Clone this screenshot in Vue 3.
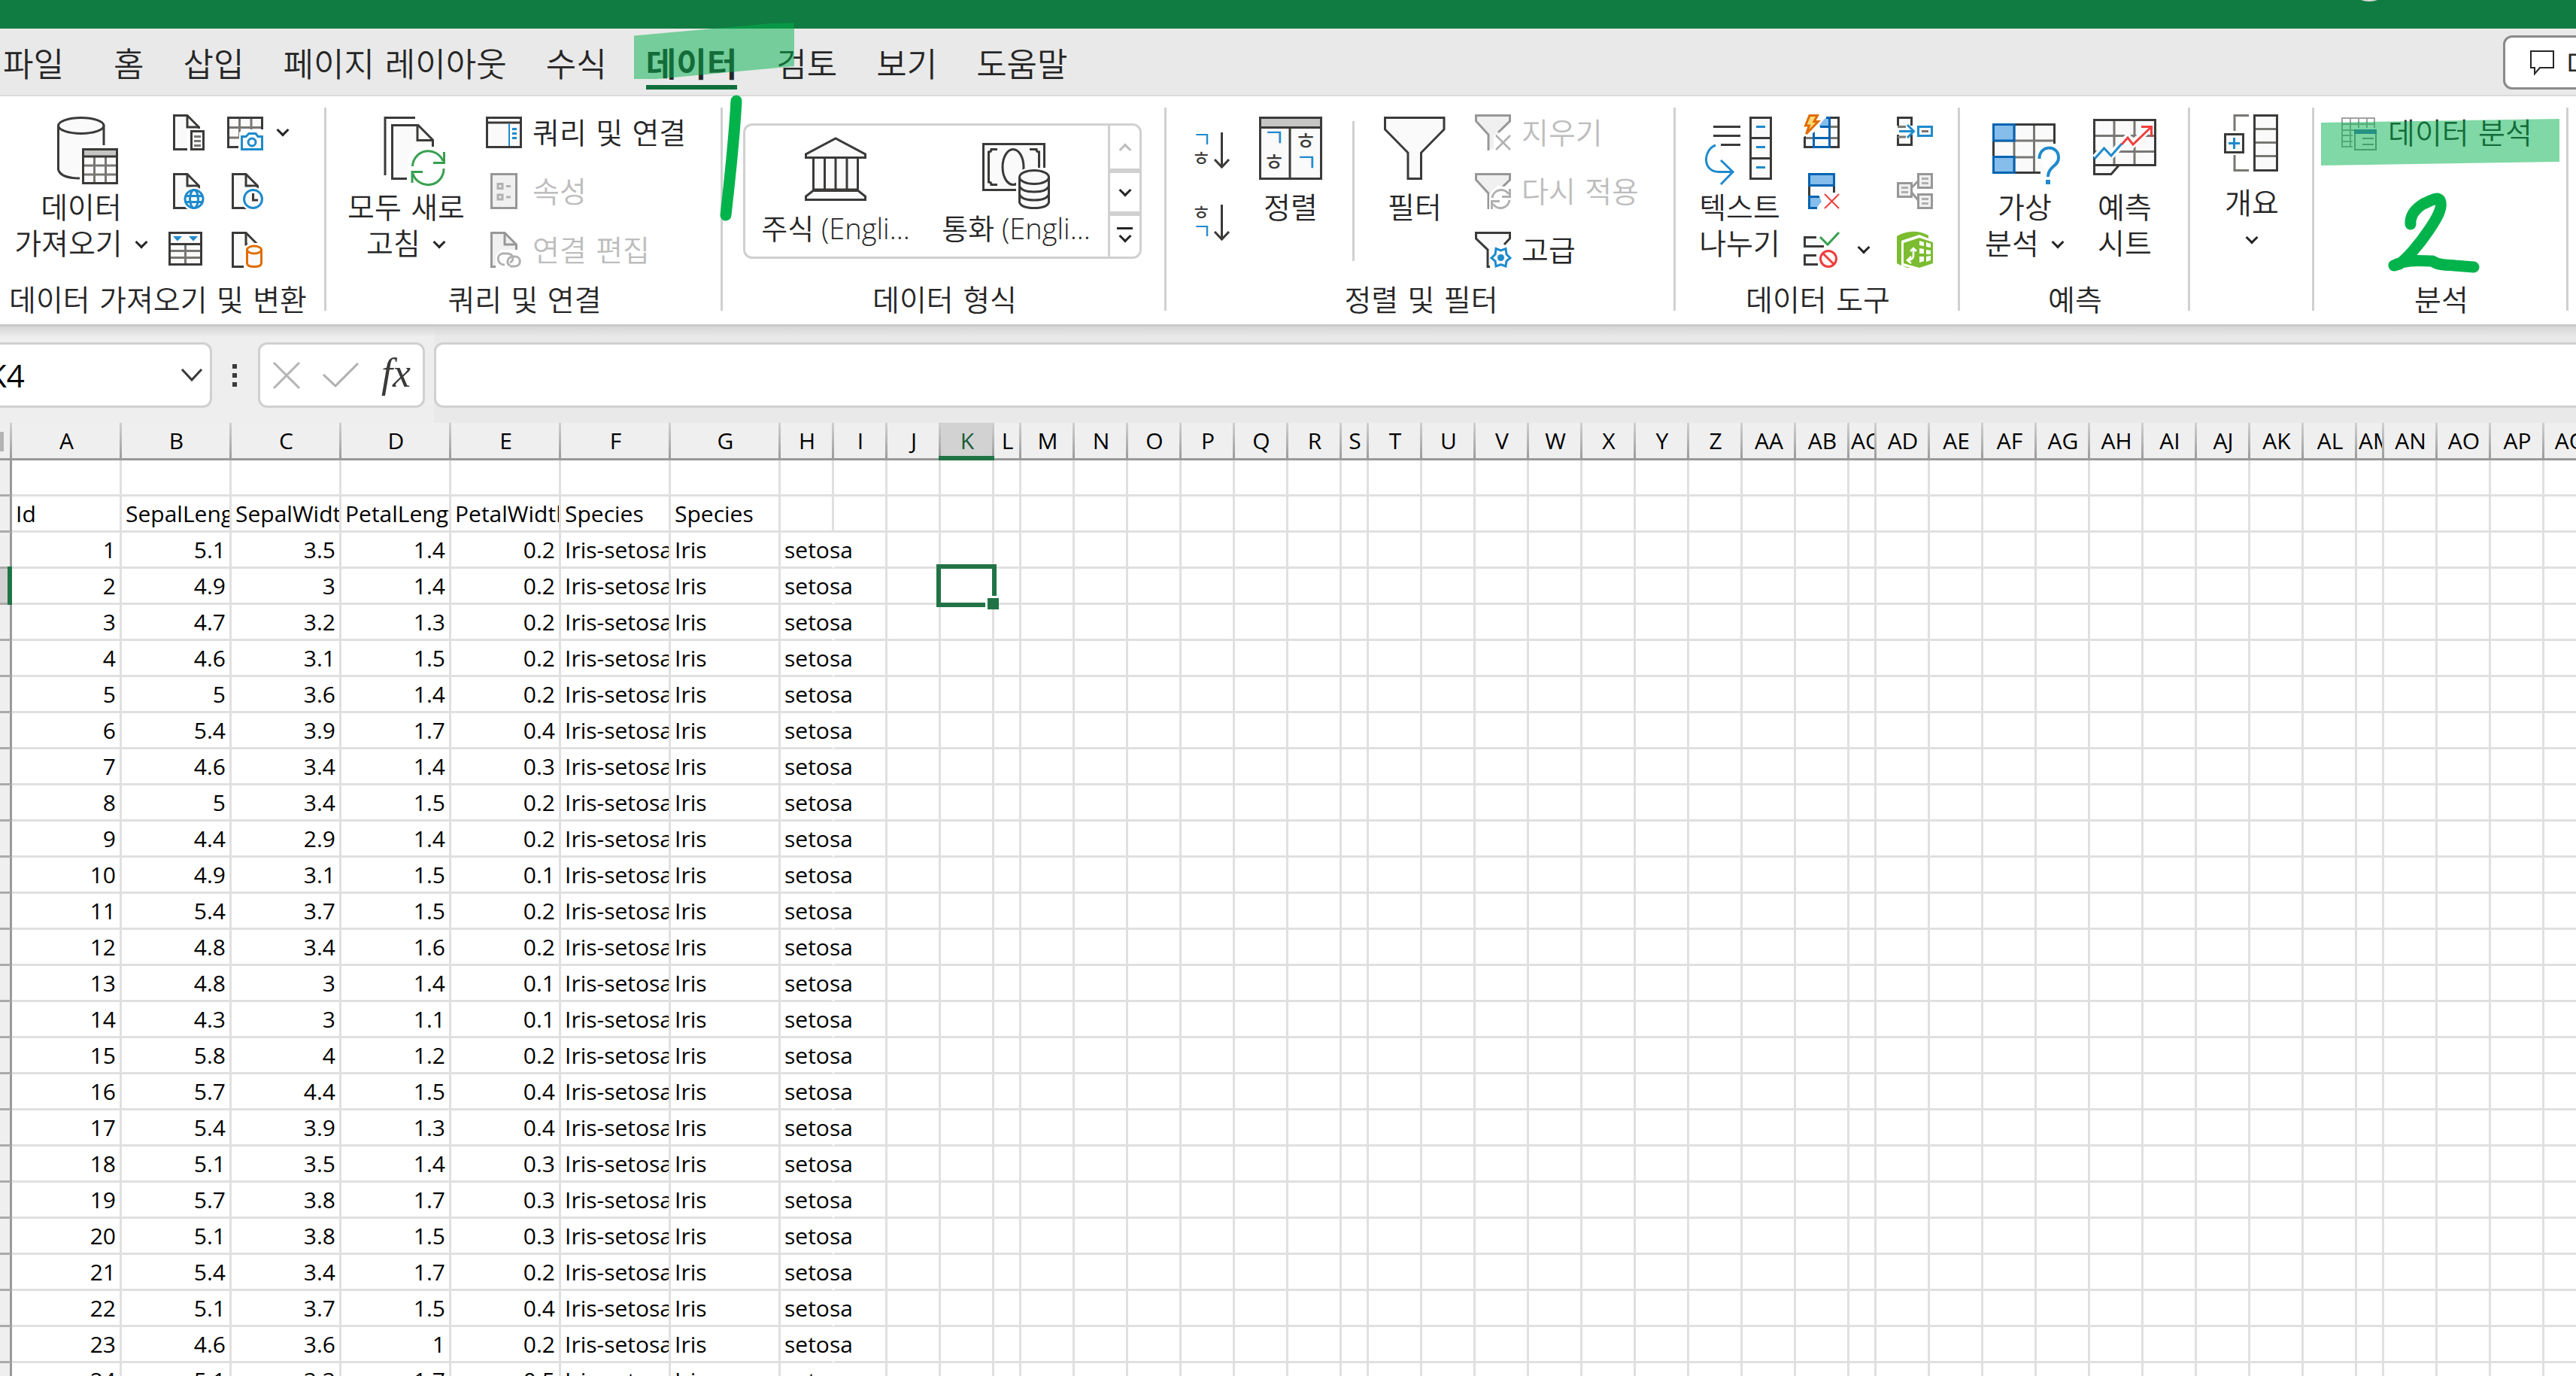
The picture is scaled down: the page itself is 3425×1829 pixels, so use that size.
<script setup>
import { computed, ref } from 'vue'

const tabs = ['파일', '홈', '삽입', '페이지 레이아웃', '수식', '데이터', '검토', '보기', '도움말']
const activeTab = ref('데이터')
const nameBox = ref('K4')
const formula = ref('')

const doc = '<path class="k f" d="M24 46.5H7.5V1.5H25L40.5 17V46.5H24"/><path class="k" d="M25 1.5V17H41"/>'
const docWith = (halo, badge) => doc + halo + badge
const grayFunnel = '<path d="M1.5 1.5H46.5V9L31 25V46H19.5V27L1.5 9Z" fill="#f0f0f0"/><path class="g" d="M31 24L46.5 9V1.5H1.5V9L18 27V48"/>'

const icons = {
  getData:
    '<path class="f" d="M14.5 12V70Q18 81 44 82H75V12Z"/><path class="k" d="M14.5 12V70C16 79 30 82 44 82M75 12V40"/><ellipse class="k f" cx="44.8" cy="12" rx="30.2" ry="10.5"/><path fill="#fff" d="M43 38H97V91H43Z"/><path class="f" d="M47 43H93V89H47Z"/><path fill="#c6c6c4" d="M47 43H93V52H47Z"/><path class="m" d="M62.5 54V88M77.5 54V88M48 65H92M48 77H92"/><path class="k" d="M47.5 43.5H92.5V88.5H47.5ZM47 53H93"/>',
  refreshAll:
    '<path class="k" d="M57 1.5H17V78"/><path class="k f" d="M46 82.5H26.5V11.5H61L80.5 31V42"/><path class="k" d="M60 11.5V31.5H80.5"/><path fill="#fff" d="M48 90V50L60 40H98V90Z"/><path class="gr" d="M53.5 66A21 21 0 0 1 94 59M95.500 47V61.500H81M95 69A21 21 0 0 1 54 76M53 88V73.500H67"/>',
  sortBig:
    '<path class="k f" d="M4.500 1.500H85.500V82.500H4.500Z"/><path fill="#c6c6c4" d="M6 3H84V13H6Z"/><path class="k" d="M5 14.500H85M44 14V83"/><text class="jb" x="23" y="39">ㄱ</text><text class="jk" x="65" y="44">ㅎ</text><text class="jk" x="23" y="72">ㅎ</text><text class="jb" x="66" y="72">ㄱ</text>',
  sortAsc: '<text class="jb s" x="11" y="20">ㄱ</text><text class="jk s" x="10" y="45">ㅎ</text><path class="k" d="M37.500 0V46M28 36L37.500 46L47 36"/>',
  sortDesc: '<text class="jk s" x="10" y="21">ㅎ</text><text class="jb s" x="11" y="46">ㄱ</text><path class="k" d="M37.500 0V46M28 36L37.500 46L47 36"/>',
  filter: '<path class="k f" d="M5.500 1.500H84V17L53.500 48V82.500H36V48L5.500 17Z"/>',
  textColumns:
    '<path class="k" d="M10 13.500H46M10 25.500H46M20 37.500H46"/><path class="k f" d="M59.500 1.500H86.500V82.500H59.500ZM59.500 28.500H86.500M59.500 55.500H86.500"/><path class="b" d="M67 13.500H79M67 40.500H79M67 67.500H79M13 38C-4 44 -5 74 18 73.500H36M20 58L36 73.500L20 90"/>',
  whatIf:
    '<path class="f" d="M2 10H85V74H2Z"/><path class="m" d="M31 10V74M57.500 10V74M3 32H84M3 54H84"/><path class="k" d="M3.500 10.500H84.500V36M3.500 10V74.500H66"/><path class="bf" d="M3.500 10.500H31V32H3.500ZM3.500 53.500H31V74.500H3.500Z"/><path d="M64.500 56C64 37 90.500 37 90 55C90 66 76 66 76 80" fill="#fff" stroke="#fff" stroke-width="11"/><path fill="none" stroke="#1e8bcd" stroke-width="4" d="M64.500 56C64 37 90.500 37 90 55C90 66 76 66 76 80"/><path fill="#1e8bcd" d="M73 84H79V90H73Z"/>',
  forecast:
    '<path class="f" d="M4 4H86V64H38L27 76H4Z"/><path class="m" d="M31 4V64M58 4V64M5 25.500H85M5 46.500H85"/><path class="k" d="M4.500 4.500H85.500V64.500H4.500ZM4.500 64V76.500H27L37 65"/><path fill="none" stroke="#fafafa" stroke-width="10" d="M6 55L17.500 42L27 51L49 28L56 36L79 14"/><path class="b" d="M5 56L17.500 42L27 52L41 36"/><path class="r" d="M41 37L49 28L56 37L80 14M67 13.500H80.500V27"/>',
  outline:
    '<path class="m" d="M41 4.500H22V25M22 57V77.500H41"/><path class="k f" d="M9.500 29.500H33.500V53.500H9.500ZM48.500 4.500H78.500V77.500H48.500Z"/><path class="m" d="M50 22.500H77M50 40.500H77M50 58.500H77"/><path class="b" d="M14 41.500H29M21.500 34V49"/>',
  docList: docWith('<path fill="#fff" d="M25 19H50V50H25Z"/>', '<path class="k f" d="M30.500 22.500H46.500V46.500H30.500Z"/><path class="m" d="M34 29.500H43M34 35.500H43M34 41.500H43"/>'),
  camera:
    '<path class="f" d="M1.500 4.500H46.500V43.500H1.500Z"/><path class="m" d="M16.500 5V30M32 5V22M2 17.500H46M2 31H16"/><path class="k" d="M15 43.500H1.500V4.500H46.500V22"/><path fill="#fff" d="M16 24L22 20H50V50H16Z"/><path class="b f" d="M19.500 29.500H25L29 25.500H38L41 29.500H46.500V46.500H19.500Z"/><circle class="b" cx="33" cy="37" r="5"/>',
  docGlobe: docWith('<circle fill="#fff" cx="34" cy="34.500" r="16"/>', '<circle class="b f" cx="34" cy="34.500" r="12"/><ellipse class="b" cx="34" cy="34.500" rx="5.500" ry="12"/><path class="b" d="M23 30.500H45M23 38.500H45"/>'),
  docClock: docWith('<circle fill="#fff" cx="34.500" cy="34.500" r="16"/>', '<circle class="b f" cx="34.500" cy="34.500" r="12"/><path class="k" d="M34.500 27V36H41"/>'),
  tableFilter:
    '<path class="k f" d="M1.500 1.500H43.500V43.500H1.500ZM1.500 16.500H43.500"/><path class="m" d="M3 25.500H42M3 34.500H42M22.500 18V42"/><path fill="#1e8bcd" d="M6 6H18L12 12.500ZM27 6H39L33 12.500Z"/>',
  docDb: docWith('<path fill="#fff" d="M22 24L28 15H46L50 20V50H22Z"/>', '<path class="o f" d="M26.500 24V42Q27 46.500 36 46.500T45.500 42V24"/><ellipse class="o f" cx="36" cy="24" rx="9.500" ry="5"/>'),
  pane: '<path class="k f" d="M1.500 4.500H46.500V43.500H1.500ZM1.500 11H46.500"/><path fill="none" stroke="#1e8bcd" stroke-width="2" d="M31 12V42"/><path fill="#1e8bcd" d="M35 18H41V21H35ZM35 24H41V27H35ZM35 30H41V33H35Z"/>',
  props: '<path class="g fg" d="M7.500 1.500H40.500V46.500H7.500Z"/><path class="g2" d="M16 14.500H22V20.500H16ZM16 29H22V35H16ZM27 17.500H33M27 32H33"/>',
  docLink: '<path class="g fg" d="M24 46.500H7.500V1.500H25L40.500 17V46.500H24"/><path class="g" d="M25 1.500V17H41"/><path fill="#fff" d="M13 50V32L20 24H50V50Z"/><path class="g2" d="M25 44C15 44 13 31 22 29H28C37 29 38 38 32 41M32 46H38C48 46 47 33 39 33H36C28 34 27 42 32 45"/>',
  clear: grayFunnel + '<path fill="#fff" d="M25 28H50V50H25Z"/><path fill="none" stroke="#b0b0b0" stroke-width="2.500" d="M28 28L47 47M47 28L28 47"/>',
  reapply: grayFunnel + '<path fill="#fff" d="M19 50V28L30 17L50 19V50Z"/><path class="g2" d="M23 33A12 12 0 0 1 45 28M46.500 21V31.500H36M46 36A12 12 0 0 1 24 41M22.500 48V37.500H33"/>',
  advanced:
    '<path class="f" d="M1.500 1.500H46.500V9L31 25V46H17.500V27L1.500 9Z"/><path class="k" d="M39 17L46.500 9V1.500H1.500V9L17 24V46.500H22"/><path fill="#fff" d="M20 50V30L30 19L50 19V50Z"/><path class="b f" d="M28 22.500L34.500 25L41 22.500L42 30L47 35L42 39L41 46L34.500 43.500L28 46L27 39L22 35L27 30Z"/><circle fill="#1e8bcd" cx="34.500" cy="34.500" r="4.500"/>',
  flashFill:
    '<path class="f" d="M2 28L30 3H48V45H2Z"/><path class="m" d="M1 31.500H47M36 16.500H47"/><path class="k" d="M36 4.500H46.500V43.500H1.500V28"/><path fill="#85bdeb" d="M14 16H34V4H31Z"/><path class="nb" d="M13.500 22V43.500H34.500V4.500H30M22 16.500H34M14 31.500H34"/><path fill="#fff" d="M0 30V0H32L14 24Z"/><path d="M8 1.500H18.500L14 9.500H19.500L3.500 26L7.500 15H2.500Z" fill="#ffd978" stroke="#e06c00" stroke-width="3"/>',
  removeDup:
    '<path class="k f" d="M7.500 16H40.500V32H7.500Z"/><path class="bf" d="M7.500 1.500H40.500V16.500H7.500ZM7.500 31.500H40.500V46.500H7.500Z"/><path fill="#fff" d="M16 48L24 38L20 29L41 26L50 26V50H16Z"/><path fill="#85bdeb" d="M9 33H18L23 38L16 45H9Z"/><path class="nb" d="M7.500 31.500H19M7.500 46.500H18"/><path class="r2" d="M28 28L47 47M47 28L28 47"/>',
  validation:
    '<path class="k f" d="M17 7.500H1.500V19.500H27M17 31.500H1.500V43.500H19"/><path fill="none" stroke="#379f4e" stroke-width="3" d="M22 7L32 17L47 1"/><circle class="r f" cx="33" cy="36" r="10.500"/><path class="r" d="M25.500 28.500L40.500 43.500"/>',
  consolidate:
    '<path class="k f" d="M1.500 15V4.500H19.500V15M1.500 27V40.500H19.500V27"/><path class="m" d="M1 16.500H12M1 30H12"/><path d="M2 22.500H24" stroke="#fff" stroke-width="9"/><path class="b" d="M3 22.500H22M14 14L22.500 22.500L14 31"/><path class="b f" d="M28.500 16.500H46.500V28.500H28.500Z"/><path class="m" d="M33 22.500H42"/>',
  relations:
    '<path class="g" d="M19 20L30 9M19 25L30 38"/><path class="g fg" d="M1.500 13.500H19.500V31.500H1.500ZM28.500 1.500H46.500V19.500H28.500ZM28.500 28.500H46.500V46.500H28.500Z"/><path class="g2" d="M6 19.500H15M6 25.500H15M33 7.500H42M33 13.500H42M33 34.500H42M33 40.500H42"/>',
  dataModel:
    '<path fill="#7cbc30" d="M0 6C12 -2 30 -2 42 5V9L30 4L6 12V45L0 42Z"/><path fill="#7cbc30" d="M9 15L30 8L48 14V42L30 48L9 42ZM7 45L18 48H14Z"/><path fill="#fff" d="M30 12L36 14V19L30 18ZM39 14L45 16V21L39 20ZM30 22L36 23V29L30 29ZM39 24L45 25V30L39 30ZM30 33H36V39L30 41ZM39 33L45 32V38L39 40Z"/><path fill="none" stroke="#fff" stroke-width="2.500" d="M22 23V32Q22 37 15 38M18 26L22 22L26 26M19 33L14 38L19 42"/>',
  analysis:
    '<path fill="none" stroke="#a2a2a2" stroke-width="2" d="M1 5H44V13H1ZM1 5V43H15M12 5V43M23 5V18M34 5V18M1 21H17M1 28H15M1 36H15M44 13V18"/><path d="M18 21H46V47H18Z" fill="#fbfbfb" stroke="#8a8a8a" stroke-width="2"/><path fill="#4a73b8" d="M17 20H47V26H17Z"/><path stroke="#8a8a8a" stroke-width="2" d="M28 32H43M28 40H43"/>',
  stocks:
    '<path class="k f" d="M1.500 27.500V23L41 2L80.500 23V27.500ZM11.500 28V70H70.500V28M1.500 83.500V79L11 71.500H71L80.500 79V83.500ZM26.500 28V71M41 28V71M56 28V71M11 71.500H71"/>',
  currency:
    '<path class="k f" d="M1.500 1.500H82.500V62.500H1.500Z"/><path class="k" d="M20 8.500H12Q12 12 8.500 12V52Q12 52 12 55.500H20M63 8.500H72Q72 12 75.500 12V36"/><ellipse class="k f" cx="41" cy="32" rx="14" ry="23.500"/><path fill="#fff" d="M45 66V42Q52 33 67 33H90V80H45Z"/><path class="k f" d="M49.500 45V79Q52 86.500 69 86.500T88.500 79V45"/><path class="k" d="M49.500 57Q52 65 69 65T88.500 57M49.500 68Q52 76 69 76T88.500 68"/><ellipse class="k f" cx="69" cy="45.500" rx="19.500" ry="9"/>'
}

const columns = [
  ...'ABCDEFG'.split('').map((name) => ({ name, width: 146 })),
  ...'H I J K L M N O P Q R S T U V W X Y Z AA AB AC AD AE AF AG AH AI AJ AK AL AM AN AO AP AQ'
    .split(' ')
    .map((name) => ({ name, width: ['L', 'S', 'AC', 'AM'].includes(name) ? 36 : 71 }))
]
const sheetWidth = computed(() => 16 + columns.reduce((sum, c) => sum + c.width, 0))

const iris = [
  [5.1, 3.5, 1.4, 0.2], [4.9, 3, 1.4, 0.2], [4.7, 3.2, 1.3, 0.2], [4.6, 3.1, 1.5, 0.2],
  [5, 3.6, 1.4, 0.2], [5.4, 3.9, 1.7, 0.4], [4.6, 3.4, 1.4, 0.3], [5, 3.4, 1.5, 0.2],
  [4.4, 2.9, 1.4, 0.2], [4.9, 3.1, 1.5, 0.1], [5.4, 3.7, 1.5, 0.2], [4.8, 3.4, 1.6, 0.2],
  [4.8, 3, 1.4, 0.1], [4.3, 3, 1.1, 0.1], [5.8, 4, 1.2, 0.2], [5.7, 4.4, 1.5, 0.4],
  [5.4, 3.9, 1.3, 0.4], [5.1, 3.5, 1.4, 0.3], [5.7, 3.8, 1.7, 0.3], [5.1, 3.8, 1.5, 0.3],
  [5.4, 3.4, 1.7, 0.2], [5.1, 3.7, 1.5, 0.4], [4.6, 3.6, 1, 0.2], [5.1, 3.3, 1.7, 0.5]
]
const rows = [
  [],
  ['Id', 'SepalLengthCm', 'SepalWidthCm', 'PetalLengthCm', 'PetalWidthCm', 'Species', 'Species'],
  ...iris.map((v, i) => [i + 1, ...v, 'Iris-setosa', 'Iris', 'setosa'])
]
const selected = { row: 3, col: 10 }
</script>

<template>
  <div class="app">
    <header class="title-bar"><span class="avatar"></span></header>

    <nav class="tabs">
      <button v-for="t in tabs" :key="t" class="tab" :class="{ active: t === activeTab }" @click="activeTab = t">{{ t }}</button>
      <button class="comments">
        <svg width="32" height="34" viewBox="0 0 32 34"><path d="M1 2H31V24H13L6 32V24H1Z" fill="#fff" stroke="#262626" stroke-width="2" /></svg>
        <span>메모</span>
      </button>
    </nav>

    <section class="ribbon">
      <div class="group g-get">
        <div class="body">
          <button class="big w216">
            <svg viewBox="0 0 90 90" v-html="icons.getData"></svg>
            <span>데이터</span><span class="line">가져오기<i class="chev"></i></span>
          </button>
          <div class="stack pad8">
            <button aria-label="텍스트/CSV"><svg viewBox="0 0 48 48" v-html="icons.docList"></svg></button>
            <button aria-label="웹"><svg viewBox="0 0 48 48" v-html="icons.docGlobe"></svg></button>
            <button aria-label="테이블/범위"><svg viewBox="0 0 48 48" v-html="icons.tableFilter"></svg></button>
          </div>
          <div class="stack pad30">
            <button aria-label="그림"><svg viewBox="0 0 48 48" v-html="icons.camera"></svg><i class="chev"></i></button>
            <button aria-label="최근 원본"><svg viewBox="0 0 48 48" v-html="icons.docClock"></svg></button>
            <button aria-label="기존 연결"><svg viewBox="0 0 48 48" v-html="icons.docDb"></svg></button>
          </div>
        </div>
        <h2 class="left">데이터 가져오기 및 변환</h2>
      </div>

      <div class="group g-query">
        <div class="body">
          <button class="big">
            <svg viewBox="0 0 90 90" v-html="icons.refreshAll"></svg>
            <span>모두 새로</span><span class="line">고침<i class="chev"></i></span>
          </button>
          <div class="stack">
            <button><svg viewBox="0 0 48 48" v-html="icons.pane"></svg><span>쿼리 및 연결</span></button>
            <button disabled><svg viewBox="0 0 48 48" v-html="icons.props"></svg><span>속성</span></button>
            <button disabled><svg viewBox="0 0 48 48" v-html="icons.docLink"></svg><span>연결 편집</span></button>
          </div>
        </div>
        <h2>쿼리 및 연결</h2>
      </div>

      <div class="group g-types">
        <div class="body">
          <div class="gallery">
            <button class="item"><svg class="bank" viewBox="0 0 82 85" v-html="icons.stocks"></svg><span>주식 (Engli...</span></button>
            <button class="item"><svg class="money" viewBox="0 0 90 88" v-html="icons.currency"></svg><span>통화 (Engli...</span></button>
            <div class="scroller">
              <button aria-label="위로"><i class="chev up"></i></button>
              <button aria-label="아래로"><i class="chev"></i></button>
              <button aria-label="자세히" class="more"><i class="bar"></i><i class="chev"></i></button>
            </div>
          </div>
        </div>
        <h2>데이터 형식</h2>
      </div>

      <div class="group g-sort">
        <div class="body">
          <div class="sorts">
            <button aria-label="오름차순"><svg viewBox="0 0 48 48" v-html="icons.sortAsc"></svg></button>
            <button aria-label="내림차순"><svg viewBox="0 0 48 48" v-html="icons.sortDesc"></svg></button>
          </div>
          <button class="big w164"><svg viewBox="0 0 90 90" v-html="icons.sortBig"></svg><span>정렬</span></button>
          <div class="rule"></div>
          <button class="big w160"><svg viewBox="0 0 90 90" v-html="icons.filter"></svg><span>필터</span></button>
          <div class="stack">
            <button disabled><svg viewBox="0 0 48 48" v-html="icons.clear"></svg><span>지우기</span></button>
            <button disabled><svg viewBox="0 0 48 48" v-html="icons.reapply"></svg><span>다시 적용</span></button>
            <button><svg viewBox="0 0 48 48" v-html="icons.advanced"></svg><span>고급</span></button>
          </div>
        </div>
        <h2>정렬 및 필터</h2>
      </div>

      <div class="group g-tools">
        <div class="body">
          <button class="big w170"><svg viewBox="0 0 90 90" v-html="icons.textColumns"></svg><span>텍스트</span><span>나누기</span></button>
          <div class="stack w124">
            <button aria-label="빠른 채우기"><svg viewBox="0 0 48 48" v-html="icons.flashFill"></svg></button>
            <button aria-label="중복된 항목 제거"><svg viewBox="0 0 48 48" v-html="icons.removeDup"></svg></button>
            <button aria-label="데이터 유효성 검사"><svg viewBox="0 0 48 48" v-html="icons.validation"></svg><i class="chev wide"></i></button>
          </div>
          <div class="stack">
            <button aria-label="통합"><svg viewBox="0 0 48 48" v-html="icons.consolidate"></svg></button>
            <button aria-label="관계" disabled><svg viewBox="0 0 48 48" v-html="icons.relations"></svg></button>
            <button aria-label="데이터 모델 관리"><svg viewBox="0 0 48 48" v-html="icons.dataModel"></svg></button>
          </div>
        </div>
        <h2>데이터 도구</h2>
      </div>

      <div class="group g-forecast">
        <div class="body">
          <button class="big w172"><svg viewBox="0 0 90 90" v-html="icons.whatIf"></svg><span>가상</span><span class="line">분석<i class="chev"></i></span></button>
          <button class="big w94"><svg viewBox="0 0 90 90" v-html="icons.forecast"></svg><span>예측</span><span>시트</span></button>
        </div>
        <h2>예측</h2>
      </div>

      <div class="group g-outline">
        <div class="body">
          <button class="big w164 raised"><svg viewBox="0 0 90 90" v-html="icons.outline"></svg><span>개요</span><span class="line"><i class="chev"></i></span></button>
        </div>
      </div>

      <div class="group g-analysis">
        <div class="body">
          <div class="stack pad36">
            <button><svg viewBox="0 0 48 48" v-html="icons.analysis"></svg><span>데이터 분석</span></button>
          </div>
        </div>
        <h2>분석</h2>
      </div>
    </section>

    <svg class="ink" aria-hidden="true">
      <path class="marker" d="M843 47.500L1025 31L1056 30.500V88L873 105H843Z" />
      <path class="marker" d="M3086 163L3403 158V215L3086 220Z" />
      <path class="pen" d="M979 134C976 190 970 240 965 286" />
      <path class="pen" d="M3205 298C3204 285 3214 276 3222 271C3232 267 3240 261 3244 266C3249 275 3240 290 3230 305C3216 326 3200 344 3190 351L3183 353C3200 344 3220 347 3234 347C3244 354 3258 352 3264 353L3289 355" />
    </svg>

    <section class="formula-bar">
      <div class="name-box">
        <input v-model="nameBox" aria-label="이름 상자" />
        <button aria-label="이름 목록"><svg width="30" height="20" viewBox="0 0 30 20"><path d="M2 2L15 16L28 2" fill="none" stroke="#3b3a39" stroke-width="3" /></svg></button>
      </div>
      <div class="dots"><i></i><i></i><i></i></div>
      <div class="fx-box">
        <button aria-label="취소"><svg width="36" height="36" viewBox="0 0 36 36"><path d="M1 1L35 35M35 1L1 35" fill="none" stroke="#b5b5b5" stroke-width="3" /></svg></button>
        <button aria-label="입력"><svg width="48" height="34" viewBox="0 0 48 34"><path d="M1 16L17 31L47 1" fill="none" stroke="#b0b0b0" stroke-width="3" /></svg></button>
        <button class="fx">fx</button>
      </div>
      <div class="formula"><input v-model="formula" aria-label="수식 입력줄" /></div>
    </section>

    <main class="sheet">
      <table :style="{ width: sheetWidth + 'px' }">
        <colgroup>
          <col class="row-head" />
          <col v-for="c in columns" :key="c.name" :style="{ width: c.width + 'px' }" />
        </colgroup>
        <thead>
          <tr>
            <th class="corner"><i></i></th>
            <th v-for="(c, i) in columns" :key="c.name" scope="col" :class="{ on: i === selected.col }"><div class="clip">{{ c.name }}</div></th>
          </tr>
        </thead>
        <tbody>
          <tr v-for="(r, y) in rows" :key="y">
            <th scope="row" :class="{ on: y === selected.row }"></th>
            <td v-for="(c, x) in columns" :key="c.name" :class="{ num: typeof r[x] === 'number', spill: x === 7 && r[x] }">
              <div v-if="r[x] !== undefined" class="clip">{{ r[x] }}</div>
              <div v-if="y === selected.row && x === selected.col" class="cursor"><i></i></div>
            </td>
          </tr>
        </tbody>
      </table>
    </main>
  </div>
</template>

<style>
body {
  margin: 0;
  overflow: hidden;
}
svg {
  overflow: visible;
}
svg .k { fill: none; stroke: #3b3a39; stroke-width: 3; }
svg .m { fill: none; stroke: #797774; stroke-width: 3; }
svg .b { fill: none; stroke: #1e8bcd; stroke-width: 3; }
svg .nb { fill: none; stroke: #0063b1; stroke-width: 3; }
svg .bf { fill: #85bdeb; stroke: #0063b1; stroke-width: 3; }
svg .r { fill: none; stroke: #ef3e3e; stroke-width: 3; }
svg .r2 { fill: none; stroke: #ef3e3e; stroke-width: 2; }
svg .o { fill: none; stroke: #e06c00; stroke-width: 3; }
svg .gr { fill: none; stroke: #379f4e; stroke-width: 3; }
svg .g { fill: none; stroke: #979797; stroke-width: 3; }
svg .g2 { fill: none; stroke: #b0b0b0; stroke-width: 3; }
svg .f { fill: #fafafa; }
svg .fg { fill: #f0f0f0; }
svg .jb, svg .jk {
  font: 400 32px "Noto Sans CJK KR", sans-serif;
  text-anchor: middle;
  fill: #3b3a39;
}
svg .jb { fill: #1e8bcd; }
svg .jb.s, svg .jk.s { font-size: 28px; }
</style>

<style scoped>
.app {
  position: relative;
  height: 100vh;
  overflow: hidden;
  display: flex;
  flex-direction: column;
  background: #e9e9e9;
  color: #262626;
  font-family: "DejaVu Sans", "Noto Sans CJK KR", sans-serif;
  font-size: 39px;
}
button {
  margin: 0;
  padding: 0;
  border: 0;
  background: none;
  color: inherit;
  font: inherit;
  white-space: nowrap;
}
button:disabled { color: #bdbdbd; }
input {
  border: 0;
  padding: 0;
  background: none;
  outline: 0;
  color: #000;
  font: 42px "Open Sans", sans-serif;
}
.title-bar {
  flex: none;
  height: 38px;
  background: #107c41;
  display: flex;
  justify-content: flex-end;
  overflow: hidden;
}
.avatar {
  width: 64px;
  height: 64px;
  margin: -62px 243px 0 0;
  border-radius: 50%;
  background: #d8d8d8;
}
.tabs {
  flex: none;
  display: flex;
  gap: 52px;
  height: 88px;
  padding-left: 4px;
  border-bottom: 2px solid #dadada;
  font-size: 44px;
  font-weight: 350;
}
.tab {
  flex: none;
  display: flex;
  align-items: center;
  box-sizing: border-box;
  height: 81px;
  padding-top: 8px;
}
.tab:first-child { margin-right: 14px; }
.tab.active {
  font-weight: 700;
  background: linear-gradient(#0f703b, #0f703b) bottom / 100% 6px no-repeat;
}
.comments {
  flex: none;
  display: flex;
  align-items: center;
  gap: 16px;
  width: 148px;
  height: 72px;
  box-sizing: border-box;
  margin: 9px -51px 0 auto;
  padding-left: 33px;
  border: 3px solid #8a8a8a;
  border-radius: 12px;
  background: #fff;
  font-size: 42px;
  overflow: hidden;
}
.comments svg { flex: none; }

.ribbon {
  flex: none;
  display: flex;
  height: 303px;
  background: #fff;
  border-bottom: 3px solid #c9c9c9;
  overflow: hidden;
  font-weight: 350;
}
.group {
  flex: none;
  display: flex;
  flex-direction: column;
  box-sizing: border-box;
  padding-top: 9px;
  background: linear-gradient(#d0d0d0, #d0d0d0) right 15px / 3px 270px no-repeat;
}
.g-get { width: 434px; }
.g-query { width: 527px; }
.g-types { width: 590px; }
.g-sort { width: 677px; }
.g-tools { width: 378px; }
.g-forecast { width: 306px; }
.g-outline { width: 165px; }
.g-analysis { width: 338px; }
.body {
  display: flex;
  height: 234px;
}
h2 {
  margin: 0;
  font-size: 39px;
  font-weight: inherit;
  line-height: 58px;
  text-align: center;
  white-space: nowrap;
}
h2.left {
  text-align: left;
  padding-left: 12px;
}
.big {
  flex: none;
  display: flex;
  flex-direction: column;
  align-items: center;
  width: 212px;
  padding-top: 18px;
  line-height: 48px;
}
.big svg {
  width: 90px;
  height: 90px;
  margin-bottom: 8px;
}
.big.raised { padding-top: 12px; }
.big span { height: 48px; }
.w216 { width: 216px; }
.w172 { width: 172px; }
.w170 { width: 170px; }
.w164 { width: 164px; }
.w160 { width: 160px; }
.w94 { width: 94px; }
.line {
  display: flex;
  align-items: center;
  gap: 16px;
}
.chev {
  flex: none;
  width: 9px;
  height: 9px;
  border: solid #262626;
  border-width: 0 3px 3px 0;
  transform: rotate(45deg);
  margin: 0 3px 6px;
}
.chev.up {
  border-color: #bdbdbd;
  transform: rotate(225deg);
  margin: 6px 3px 0;
}
.stack {
  flex: none;
  display: flex;
  flex-direction: column;
}
.stack button {
  display: flex;
  align-items: center;
  gap: 14px;
  height: 78px;
}
.stack span { padding-bottom: 4px; }
.stack svg {
  flex: none;
  width: 48px;
  height: 48px;
}
.pad8 { padding-left: 8px; }
.pad30 { padding-left: 30px; }
.pad36 { padding-left: 36px; }
.pad30 .chev { margin-left: 6px; }
.w124 { width: 124px; }
.chev.wide { margin-left: 12px; }

.gallery {
  display: flex;
  box-sizing: border-box;
  width: 530px;
  height: 180px;
  margin: 27px 0 0 27px;
  border: 3px solid #d0d0d0;
  border-radius: 12px;
  overflow: hidden;
}
.item {
  flex: none;
  display: flex;
  flex-direction: column;
  align-items: center;
  justify-content: flex-end;
  width: 240px;
  font: 350 38px/48px "Open Sans", "Noto Sans CJK KR", sans-serif;
  padding-bottom: 14px;
}
.bank {
  width: 82px;
  height: 85px;
  margin-bottom: 12px;
}
.money {
  width: 90px;
  height: 88px;
  margin-bottom: 1px;
}
.scroller {
  display: grid;
  grid-template-rows: 57px 51px 54px;
  gap: 6px;
  flex: 1;
  margin-left: 2px;
  background: #d0d0d0;
  border-left: 3px solid #d0d0d0;
}
.scroller button {
  display: flex;
  flex-direction: column;
  align-items: center;
  justify-content: center;
  background: #fff;
}
.bar {
  width: 21px;
  height: 3px;
  background: #262626;
  margin-bottom: 3px;
}
.sorts {
  display: flex;
  flex-direction: column;
  gap: 48px;
  width: 83px;
  box-sizing: border-box;
  padding: 39px 0 0 36px;
}
.sorts button {
  width: 48px;
  height: 48px;
}
.sorts svg {
  display: block;
  width: 48px;
  height: 48px;
}
.rule {
  width: 3px;
  height: 186px;
  margin-top: 24px;
  background: #d0d0d0;
}

.ink {
  position: absolute;
  top: 0;
  left: 0;
  width: 100%;
  height: 431px;
  pointer-events: none;
}
.marker { fill: rgba(0, 178, 76, 0.5); }
.pen {
  fill: none;
  stroke: #02b34c;
  stroke-width: 15px;
  stroke-linecap: round;
  stroke-linejoin: round;
}

.formula-bar {
  flex: none;
  display: flex;
  height: 128px;
  box-sizing: border-box;
  padding-top: 21px;
  background: linear-gradient(#d6d6d6, rgba(233, 233, 233, 0) 14px), linear-gradient(90deg, #eee 577px, #e9e9e9 577px);
  overflow: hidden;
}
.name-box, .fx-box, .formula {
  box-sizing: border-box;
  height: 87px;
  border: 3px solid #d0d0d0;
  border-radius: 12px;
  background: #fff;
  display: flex;
  align-items: center;
}
.name-box {
  width: 302px;
  margin-left: -20px;
  padding-right: 9px;
}
.name-box input {
  flex: 1;
  min-width: 0;
}
.name-box svg, .fx-box svg { display: block; }
.dots {
  display: flex;
  flex-direction: column;
  justify-content: center;
  gap: 6px;
  padding: 0 28px 0 27px;
  height: 87px;
}
.dots i {
  width: 6px;
  height: 6px;
  background: #3b3a39;
}
.fx-box {
  width: 222px;
  padding-left: 17px;
  gap: 30px;
  margin-right: 12px;
}
.fx {
  font: italic 54px/60px "Liberation Serif", serif;
  color: #3b3a39;
}
.fx-box .fx { padding-bottom: 6px; }
.formula {
  flex: 1;
  margin-right: -20px;
}
.formula input { flex: 1; }

.sheet {
  flex: 1;
  min-height: 0;
  overflow: hidden;
  background: #fff;
  color: #000;
}
table {
  table-layout: fixed;
  border-collapse: separate;
  border-spacing: 0;
  font: 30px/45px "Open Sans", "Noto Sans CJK KR", sans-serif;
}
.row-head { width: 16px; }
th, td {
  position: relative;
  box-sizing: border-box;
  height: 48px;
  padding: 0;
  font-weight: 400;
  border-right: 3px solid #e0e0e0;
  border-bottom: 3px solid #e0e0e0;
}
.clip {
  overflow: hidden;
  white-space: nowrap;
}
td .clip { padding-left: 5px; }
td.num .clip {
  padding: 0 5px 0 0;
  text-align: right;
}
td.spill { border-right-color: transparent; }
td.spill .clip { overflow: visible; }
thead th {
  height: 50px;
  line-height: 47px;
  background: linear-gradient(#d0d0d0, #999) right / 3px 100% no-repeat, #efefef;
  background-origin: border-box;
  border-right-color: transparent;
  border-bottom-color: #999;
}
thead .clip { padding-left: 2px; }
thead th.on {
  color: #185c37;
  background-color: #d2d2d2;
}
thead th.on::after {
  content: "";
  position: absolute;
  z-index: 1;
  left: -3px;
  right: -3px;
  bottom: -3px;
  height: 6px;
  background: #217346;
}
.corner i {
  position: absolute;
  left: 0;
  top: 12px;
  width: 5px;
  height: 26px;
  background: #b4b4b4;
}
tbody th {
  background: #efefef;
  border-right-color: #999;
  border-bottom-color: #ababab;
}
tbody th.on { background: #d2d2d2; }
tbody th.on::after {
  content: "";
  position: absolute;
  z-index: 1;
  top: -3px;
  right: -3px;
  bottom: -3px;
  width: 6px;
  background: #217346;
}
.cursor {
  position: absolute;
  z-index: 1;
  left: -6px;
  top: -6px;
  right: -6px;
  bottom: -6px;
  border: 6px solid #217346;
}
.cursor i {
  position: absolute;
  right: -9px;
  bottom: -9px;
  width: 15px;
  height: 15px;
  background: #217346;
  box-shadow: -3px -3px 0 #fff, 0 -3px 0 #fff, -3px 0 0 #fff;
}
</style>
